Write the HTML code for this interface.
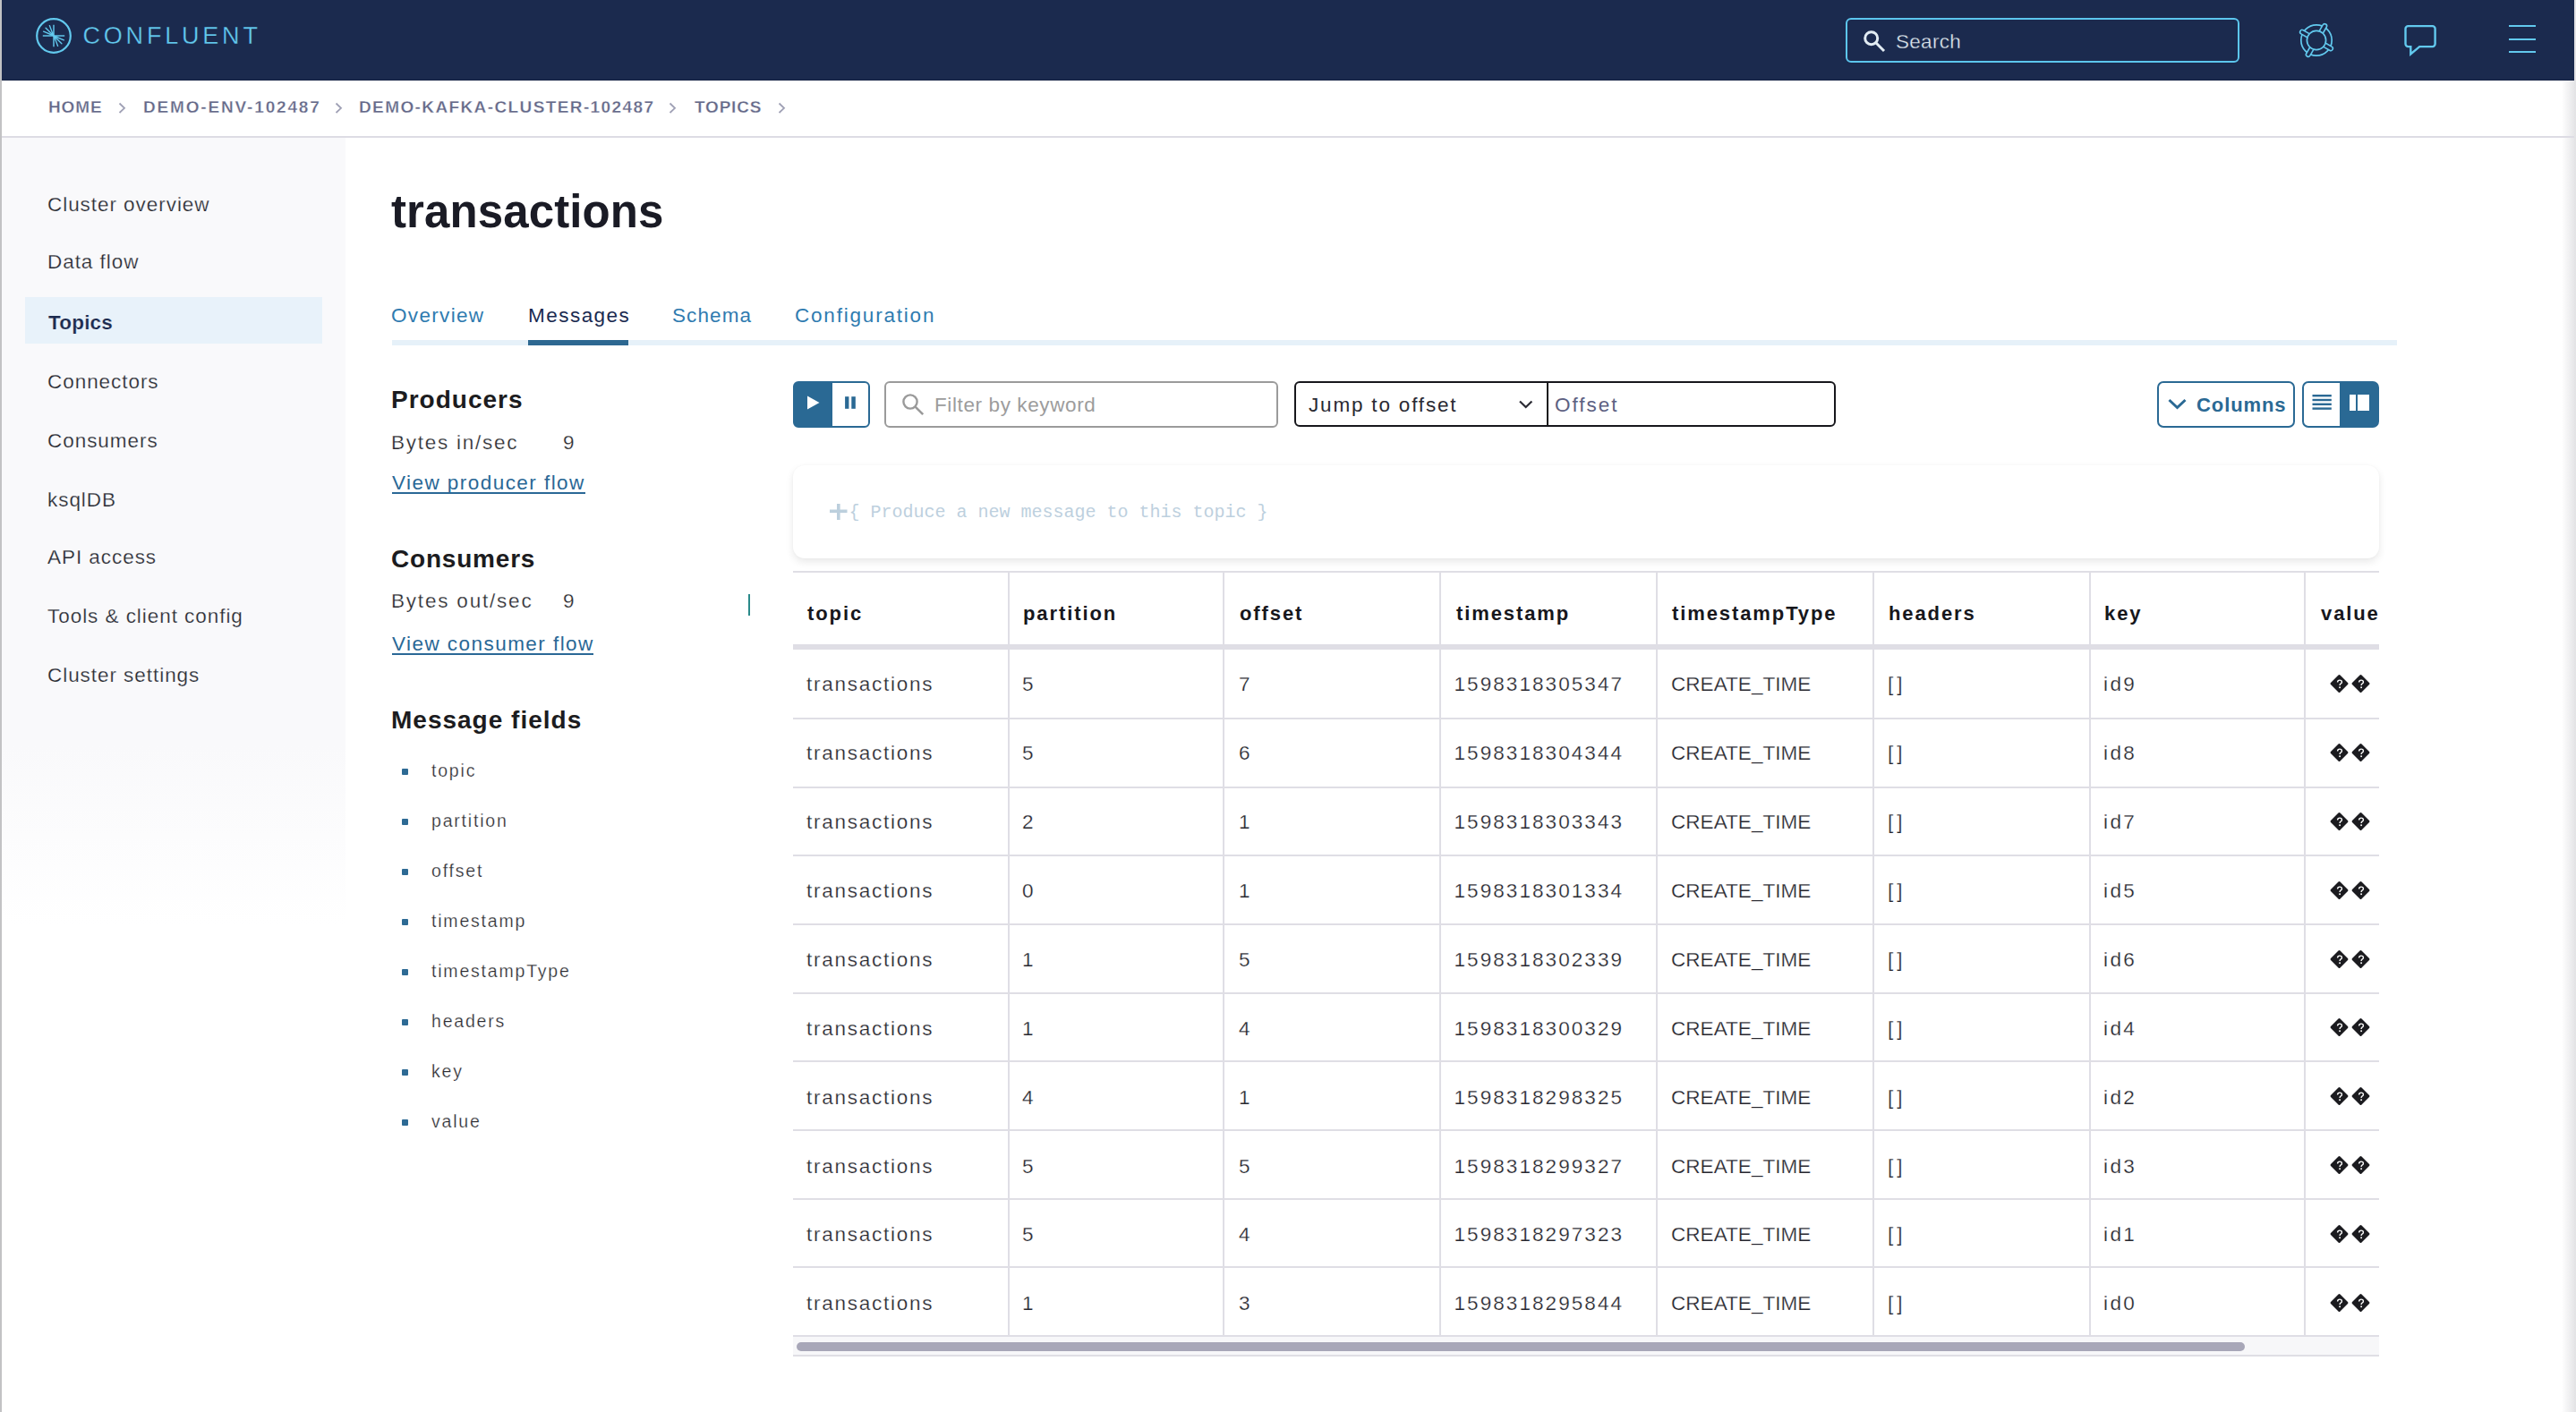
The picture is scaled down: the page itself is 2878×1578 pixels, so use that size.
<!DOCTYPE html>
<html><head><meta charset="utf-8">
<style>
*{box-sizing:border-box;margin:0;padding:0}
html,body{width:2878px;height:1578px;overflow:hidden;background:#fff;font-family:"Liberation Sans",sans-serif;position:relative}
.a{position:absolute}
.t{position:absolute;white-space:nowrap;line-height:1}
#lstrip{left:0;top:0;width:2px;height:1578px;background:#c2c2c4}
#rshade{left:2862px;top:90px;width:14px;height:1488px;background:linear-gradient(to right,rgba(230,230,232,0),rgba(230,230,232,1))}
#rstrip{left:2876px;top:0;width:2px;height:1578px;background:#e4e4e6}
#hdr{left:2px;top:0;width:2874px;height:90px;background:#1b2a4e;border-bottom:1px solid #142143}
#bc{left:2px;top:152px;width:2874px;height:2px;background:#dddce4}
.bci{font-size:19px;font-weight:bold;color:#646888;top:110px;-webkit-text-stroke:0.3px #fff}
#side{left:2px;top:154px;width:384px;height:900px;background:linear-gradient(to bottom,#f9f9fb 0px,#f9f9fb 680px,rgba(249,249,251,0) 880px)}
#hl{left:28px;top:332px;width:332px;height:52px;background:#e8f2fa}
.si{font-size:22.5px;letter-spacing:0.95px;color:#262830;left:53px;-webkit-text-stroke:0.25px #f9f9fb}
.tab{font-size:22.5px;color:#2f7bb0;top:341.5px}
.h2{font-size:28px;font-weight:bold;color:#1c1c20;letter-spacing:1.0px;left:437px}
.bx{font-size:22.5px;color:#2b2b30;-webkit-text-stroke:0.25px #fff}
.lk{font-size:22.5px;color:#2a6896;letter-spacing:1.45px;left:438px}
.bul{left:449px;width:7px;height:7px;background:#2d6a94;border-radius:1px}
.fld{left:482px;font-size:19.5px;color:#2b2b30;letter-spacing:1.8px;-webkit-text-stroke:0.25px #fff}
.rl{left:0;width:1772px;height:2px;background:#dfdee5}
.cl{top:2px;width:2px;height:854px;background:#dfdee5}
.th{font-size:22px;font-weight:bold;color:#17171c;letter-spacing:1.9px}
.td{font-size:22.5px;color:#26262e;-webkit-text-stroke:0.25px #fff}
</style></head><body>
<div class="a" id="lstrip"></div><div class="a" id="rshade"></div><div class="a" id="rstrip"></div>
<div class="a" id="hdr"></div>
<svg class="a" style="left:40px;top:20px" width="40" height="40" viewBox="0 0 40 40">
  <circle cx="20" cy="20" r="18.8" fill="none" stroke="#62c9ee" stroke-width="2.2"/>
  <g stroke="#62c9ee">
    <line x1="20" y1="7.8" x2="20" y2="32.2" stroke-width="2" stroke-opacity="0.72"/>
    <line x1="7.8" y1="20" x2="32.2" y2="20" stroke-width="2" stroke-opacity="0.72"/>
  </g>
  <g stroke="#62c9ee" stroke-width="1.35" stroke-linecap="round">
    <line x1="19" y1="18" x2="15.4" y2="8.6"/>
    <line x1="19" y1="19" x2="11.1" y2="11.3"/>
    <line x1="18" y1="19" x2="8.6" y2="15.2"/>
    <line x1="21" y1="22" x2="24.6" y2="31.4"/>
    <line x1="21" y1="21" x2="28.9" y2="28.7"/>
    <line x1="22" y1="21" x2="31.4" y2="24.8"/>
  </g>
  <g fill="#62c9ee"><path d="M20.8 20.8 L15.5 19 L19 15.5 Z"/><path d="M19.2 19.2 L24.5 21 L21 24.5 Z"/></g>
</svg>
<div class="t" style="left:92.5px;top:27.3px;font-size:27px;letter-spacing:3.8px;-webkit-text-stroke:0.3px #1b2a4e;color:#62c9ee">CONFLUENT</div>
<div class="a" style="left:2062px;top:20px;width:440px;height:50px;border:2px solid #5cc6ee;border-radius:6px"></div>
<svg class="a" style="left:2078px;top:30px" width="32" height="32" viewBox="0 0 32 32">
  <circle cx="12.7" cy="12.7" r="7" fill="none" stroke="#e2ecf3" stroke-width="3"/>
  <line x1="17.8" y1="17.8" x2="27" y2="27" stroke="#e2ecf3" stroke-width="3"/>
</svg>
<div class="t" style="left:2118px;top:36px;font-size:22.5px;letter-spacing:0.3px;-webkit-text-stroke:0.3px #1b2a4e;color:#dde6ee">Search</div>
<svg class="a" style="left:2563px;top:20px" width="50" height="50" viewBox="0 0 50 50">
  <circle cx="25" cy="25" r="17.2" fill="none" stroke="#62c9ee" stroke-width="1.7"/>
  <g fill="#1b2a4e" stroke="#62c9ee" stroke-width="1.6">
    <path d="M10.6 -2.4 H18.4 A2.4 2.4 0 0 1 18.4 2.4 H10.6" transform="translate(25 25) rotate(-60)"/>
    <path d="M10.6 -2.4 H18.4 A2.4 2.4 0 0 1 18.4 2.4 H10.6" transform="translate(25 25) rotate(30)"/>
    <path d="M10.6 -2.4 H18.4 A2.4 2.4 0 0 1 18.4 2.4 H10.6" transform="translate(25 25) rotate(120)"/>
    <path d="M10.6 -2.4 H18.4 A2.4 2.4 0 0 1 18.4 2.4 H10.6" transform="translate(25 25) rotate(210)"/>
  </g>
  <circle cx="25" cy="25" r="10.6" fill="none" stroke="#62c9ee" stroke-width="1.7"/>
</svg>
<svg class="a" style="left:2680px;top:20px" width="50" height="50" viewBox="0 0 50 50">
  <path d="M10.5 9.1 H37.6 A3 3 0 0 1 40.6 12.1 V29.1 A3 3 0 0 1 37.6 32.1 H23.2 L13.3 40.5 V32.1 H10.5 A3 3 0 0 1 7.5 29.1 V12.1 A3 3 0 0 1 10.5 9.1 Z" fill="none" stroke="#62c9ee" stroke-width="2.4"/>
</svg>
<div class="a" style="left:2803px;top:28px;width:30px;height:2px;background:#62c9ee"></div>
<div class="a" style="left:2803px;top:42.5px;width:30px;height:2px;background:#62c9ee"></div>
<div class="a" style="left:2803px;top:57px;width:30px;height:2px;background:#62c9ee"></div>
<div class="a" id="bc"></div>
<div class="t bci" style="left:54px;letter-spacing:0.9px">HOME</div>
<div class="t bci" style="left:160px;letter-spacing:1.84px">DEMO-ENV-102487</div>
<div class="t bci" style="left:401px;letter-spacing:1.39px">DEMO-KAFKA-CLUSTER-102487</div>
<div class="t bci" style="left:776px;letter-spacing:0.8px">TOPICS</div>
<svg class="a" style="left:130px;top:112px" width="760" height="18" viewBox="0 0 760 18">
  <g fill="none" stroke="#9fa0b5" stroke-width="1.8">
    <polyline points="3.5,3.5 9,8.8 3.5,14"/>
    <polyline points="245.5,3.5 251,8.8 245.5,14"/>
    <polyline points="618.5,3.5 624,8.8 618.5,14"/>
    <polyline points="740.5,3.5 746,8.8 740.5,14"/>
  </g>
</svg>
<div class="a" id="side"></div><div class="a" id="hl"></div>
<div class="t si" style="top:217.5px">Cluster overview</div>
<div class="t si" style="top:281.5px">Data flow</div>
<div class="t si" style="left:54px;top:349.5px;font-weight:bold;color:#1c2b4f;letter-spacing:0.2px;-webkit-text-stroke:0.2px #e8f2fa">Topics</div>
<div class="t si" style="top:415.5px">Connectors</div>
<div class="t si" style="top:481.5px">Consumers</div>
<div class="t si" style="top:547.5px">ksqlDB</div>
<div class="t si" style="top:611.5px">API access</div>
<div class="t si" style="top:677.5px">Tools &amp; client config</div>
<div class="t si" style="top:743.5px">Cluster settings</div>
<div class="t" style="left:437px;top:211.2px;font-size:51px;font-weight:bold;letter-spacing:0.1px;color:#1a1b25">transactions</div>
<div class="a" style="left:438px;top:380px;width:2240px;height:6px;background:#e6f1f9"></div>
<div class="a" style="left:590px;top:380px;width:112px;height:6px;background:#2d6891"></div>
<div class="t tab" style="left:437px;letter-spacing:1.33px">Overview</div>
<div class="t tab" style="left:590px;letter-spacing:1.47px;color:#1a2a50">Messages</div>
<div class="t tab" style="left:751px;letter-spacing:1.1px">Schema</div>
<div class="t tab" style="left:888px;letter-spacing:1.8px">Configuration</div>
<div class="t h2" style="top:432.5px">Producers</div>
<div class="t bx" style="left:437px;top:483.5px;letter-spacing:1.75px">Bytes in/sec</div>
<div class="t bx" style="left:629px;top:483.5px">9</div>
<div class="t lk" style="top:529px">View producer flow</div>
<div class="a" style="left:438px;top:550px;width:216px;height:2px;background:#2a6896"></div>
<div class="t h2" style="top:610.5px;letter-spacing:0.8px">Consumers</div>
<div class="t bx" style="left:437px;top:660.5px;letter-spacing:1.8px">Bytes out/sec</div>
<div class="t bx" style="left:629px;top:660.5px">9</div>
<div class="a" style="left:836px;top:664px;width:2px;height:24px;background:#2a8a8a"></div>
<div class="t lk" style="top:709px">View consumer flow</div>
<div class="a" style="left:438px;top:729.5px;width:225px;height:2px;background:#2a6896"></div>
<div class="t h2" style="top:790.5px">Message fields</div>
<div class="a bul" style="top:859px"></div><div class="t fld" style="top:852px">topic</div>
<div class="a bul" style="top:915px"></div><div class="t fld" style="top:908px">partition</div>
<div class="a bul" style="top:971px"></div><div class="t fld" style="top:964px">offset</div>
<div class="a bul" style="top:1027px"></div><div class="t fld" style="top:1020px">timestamp</div>
<div class="a bul" style="top:1083px"></div><div class="t fld" style="top:1076px">timestampType</div>
<div class="a bul" style="top:1139px"></div><div class="t fld" style="top:1132px">headers</div>
<div class="a bul" style="top:1195px"></div><div class="t fld" style="top:1188px">key</div>
<div class="a bul" style="top:1251px"></div><div class="t fld" style="top:1244px">value</div>
<div class="a" style="left:886px;top:426px;width:86px;height:52px;border:2px solid #2a6994;border-radius:6px;background:linear-gradient(to right,#2a6994 0,#2a6994 42px,#fff 42px)"></div>
<svg class="a" style="left:886px;top:426px" width="86" height="52" viewBox="0 0 86 52">
  <path d="M16 16.5 L29.5 24 L16 31.5 Z" fill="#fff"/>
  <rect x="58.1" y="17.2" width="4.3" height="13.6" fill="#2a6994"/>
  <rect x="65.3" y="17.2" width="4.5" height="13.6" fill="#2a6994"/>
</svg>
<div class="a" style="left:988px;top:426px;width:440px;height:52px;border:2px solid #9b9b9b;border-radius:6px"></div>
<svg class="a" style="left:1004px;top:436px" width="32" height="32" viewBox="0 0 32 32">
  <circle cx="13" cy="13" r="7.6" fill="none" stroke="#9a9a9a" stroke-width="2.4"/>
  <line x1="18.6" y1="18.6" x2="27.2" y2="27.2" stroke="#9a9a9a" stroke-width="2.6"/>
</svg>
<div class="t" style="left:1044px;top:442px;font-size:22.5px;color:#9c9c9c;letter-spacing:0.61px">Filter by keyword</div>
<div class="a" style="left:1446px;top:426px;width:605px;height:51px;border:2px solid #17171c;border-radius:6px"></div>
<div class="a" style="left:1728px;top:426px;width:2px;height:51px;background:#17171c"></div>
<div class="t" style="left:1462px;top:442px;font-size:22.5px;color:#2a2a33;letter-spacing:1.82px">Jump to offset</div>
<svg class="a" style="left:1690px;top:440px" width="30" height="24" viewBox="0 0 30 24">
  <polyline points="8,8.5 14.7,15 21.4,8.5" fill="none" stroke="#2a2a33" stroke-width="2.2"/>
</svg>
<div class="t" style="left:1737px;top:442px;font-size:22.5px;color:#5d6182;letter-spacing:1.98px">Offset</div>
<div class="a" style="left:2410px;top:426px;width:154px;height:52px;border:2px solid #2a6994;border-radius:7px"></div>
<svg class="a" style="left:2418px;top:440px" width="30" height="24" viewBox="0 0 30 24">
  <polyline points="5.5,7 14.5,15.5 23.5,7" fill="none" stroke="#2a6994" stroke-width="3"/>
</svg>
<div class="t" style="left:2454px;top:441.5px;font-size:22px;font-weight:bold;color:#2a6994;letter-spacing:0.9px">Columns</div>
<div class="a" style="left:2572px;top:426px;width:86px;height:52px;border:2px solid #2a6994;border-radius:7px;background:linear-gradient(to right,#fff 0,#fff 40px,#2a6994 40px)"></div>
<svg class="a" style="left:2572px;top:426px" width="86" height="52" viewBox="0 0 86 52">
  <g fill="#2a6994">
    <rect x="11.5" y="15" width="21.3" height="2.4"/><rect x="11.5" y="19.8" width="21.3" height="2.4"/>
    <rect x="11.5" y="24.6" width="21.3" height="2.4"/><rect x="11.5" y="29.4" width="21.3" height="2.4"/>
  </g>
  <g fill="#fff"><rect x="53" y="15" width="7" height="18"/><rect x="62" y="15" width="13" height="18"/></g>
</svg>
<div class="a" style="left:886px;top:520px;width:1772px;height:104px;border-radius:13px;background:#fff;box-shadow:0 4px 10px rgba(0,0,0,0.09),0 0 3px rgba(0,0,0,0.03)"></div>
<svg class="a" style="left:924px;top:560px" width="26" height="24" viewBox="0 0 26 24">
  <rect x="3" y="9.5" width="19.5" height="3.6" fill="#bccfdd"/><rect x="11" y="3" width="3.6" height="18" fill="#bccfdd"/>
</svg>
<div class="t" style="left:948.5px;top:563px;font-family:'Liberation Mono',monospace;font-size:20px;color:#bdd0de">{ Produce a new message to this topic }</div>
<div class="a" id="tbl" style="left:886px;top:638px;width:1772px;height:880px;overflow:hidden">
<div class="a" style="left:0;top:0;width:1772px;height:2px;background:#dfdee5"></div>
<div class="a" style="left:0;top:82px;width:1772px;height:6px;background:#dfdee5"></div>
<div class="a rl" style="top:164.00px"></div>
<div class="a rl" style="top:240.67px"></div>
<div class="a rl" style="top:317.33px"></div>
<div class="a rl" style="top:394.00px"></div>
<div class="a rl" style="top:470.67px"></div>
<div class="a rl" style="top:547.33px"></div>
<div class="a rl" style="top:624.00px"></div>
<div class="a rl" style="top:700.67px"></div>
<div class="a rl" style="top:777.33px"></div>
<div class="a rl" style="top:854.00px"></div>
<div class="a cl" style="left:240px"></div>
<div class="a cl" style="left:480px"></div>
<div class="a cl" style="left:722px"></div>
<div class="a cl" style="left:964px"></div>
<div class="a cl" style="left:1206px"></div>
<div class="a cl" style="left:1448px"></div>
<div class="a cl" style="left:1688px"></div>
<div class="t th" style="left:16px;top:37px">topic</div>
<div class="t th" style="left:257px;top:37px">partition</div>
<div class="t th" style="left:499px;top:37px">offset</div>
<div class="t th" style="left:741px;top:37px">timestamp</div>
<div class="t th" style="left:982px;top:37px">timestampType</div>
<div class="t th" style="left:1224px;top:37px">headers</div>
<div class="t th" style="left:1465px;top:37px">key</div>
<div class="t th" style="left:1707px;top:37px">value</div>
<div class="t td" style="left:15.0px;top:116.00px;letter-spacing:1.75px">transactions</div>
<div class="t td" style="left:256.0px;top:116.00px;letter-spacing:1.3px">5</div>
<div class="t td" style="left:498.0px;top:116.00px;letter-spacing:1.3px">7</div>
<div class="t td" style="left:738.5px;top:116.00px;letter-spacing:2.07px">1598318305347</div>
<div class="t td" style="left:981.0px;top:116.00px;letter-spacing:0.05px">CREATE_TIME</div>
<div class="t td" style="left:1223.0px;top:116.00px;letter-spacing:4.0px">[]</div>
<div class="t td" style="left:1464.0px;top:116.00px;letter-spacing:2.4px">id9</div>
<svg class="a" style="left:1716px;top:114.00px" width="48" height="24" viewBox="0 0 48 24"><g transform="translate(2 0)"><path d="M10.5 2.5 L19 11 Q20 12 19 13 L10.5 21.5 Q9.5 22.5 8.5 21.5 L0 13 Q-1 12 0 11 L8.5 2.5 Q9.5 1.5 10.5 2.5 Z" fill="#1b1b1f"/><path d="M7.6 10.4 Q7.6 8.1 10 8.1 Q12.4 8.1 12.4 10.2 Q12.4 11.4 11 12.1 Q10.1 12.6 10.1 14.0" fill="none" stroke="#fff" stroke-width="1.4"/><rect x="9.25" y="15.4" width="1.7" height="1.7" fill="#fff"/></g><g transform="translate(26 0)"><path d="M10.5 2.5 L19 11 Q20 12 19 13 L10.5 21.5 Q9.5 22.5 8.5 21.5 L0 13 Q-1 12 0 11 L8.5 2.5 Q9.5 1.5 10.5 2.5 Z" fill="#1b1b1f"/><path d="M7.6 10.4 Q7.6 8.1 10 8.1 Q12.4 8.1 12.4 10.2 Q12.4 11.4 11 12.1 Q10.1 12.6 10.1 14.0" fill="none" stroke="#fff" stroke-width="1.4"/><rect x="9.25" y="15.4" width="1.7" height="1.7" fill="#fff"/></g></svg>
<div class="t td" style="left:15.0px;top:193.00px;letter-spacing:1.75px">transactions</div>
<div class="t td" style="left:256.0px;top:193.00px;letter-spacing:1.3px">5</div>
<div class="t td" style="left:498.0px;top:193.00px;letter-spacing:1.3px">6</div>
<div class="t td" style="left:738.5px;top:193.00px;letter-spacing:2.07px">1598318304344</div>
<div class="t td" style="left:981.0px;top:193.00px;letter-spacing:0.05px">CREATE_TIME</div>
<div class="t td" style="left:1223.0px;top:193.00px;letter-spacing:4.0px">[]</div>
<div class="t td" style="left:1464.0px;top:193.00px;letter-spacing:2.4px">id8</div>
<svg class="a" style="left:1716px;top:190.88px" width="48" height="24" viewBox="0 0 48 24"><g transform="translate(2 0)"><path d="M10.5 2.5 L19 11 Q20 12 19 13 L10.5 21.5 Q9.5 22.5 8.5 21.5 L0 13 Q-1 12 0 11 L8.5 2.5 Q9.5 1.5 10.5 2.5 Z" fill="#1b1b1f"/><path d="M7.6 10.4 Q7.6 8.1 10 8.1 Q12.4 8.1 12.4 10.2 Q12.4 11.4 11 12.1 Q10.1 12.6 10.1 14.0" fill="none" stroke="#fff" stroke-width="1.4"/><rect x="9.25" y="15.4" width="1.7" height="1.7" fill="#fff"/></g><g transform="translate(26 0)"><path d="M10.5 2.5 L19 11 Q20 12 19 13 L10.5 21.5 Q9.5 22.5 8.5 21.5 L0 13 Q-1 12 0 11 L8.5 2.5 Q9.5 1.5 10.5 2.5 Z" fill="#1b1b1f"/><path d="M7.6 10.4 Q7.6 8.1 10 8.1 Q12.4 8.1 12.4 10.2 Q12.4 11.4 11 12.1 Q10.1 12.6 10.1 14.0" fill="none" stroke="#fff" stroke-width="1.4"/><rect x="9.25" y="15.4" width="1.7" height="1.7" fill="#fff"/></g></svg>
<div class="t td" style="left:15.0px;top:270.00px;letter-spacing:1.75px">transactions</div>
<div class="t td" style="left:256.0px;top:270.00px;letter-spacing:1.3px">2</div>
<div class="t td" style="left:498.0px;top:270.00px;letter-spacing:1.3px">1</div>
<div class="t td" style="left:738.5px;top:270.00px;letter-spacing:2.07px">1598318303343</div>
<div class="t td" style="left:981.0px;top:270.00px;letter-spacing:0.05px">CREATE_TIME</div>
<div class="t td" style="left:1223.0px;top:270.00px;letter-spacing:4.0px">[]</div>
<div class="t td" style="left:1464.0px;top:270.00px;letter-spacing:2.4px">id7</div>
<svg class="a" style="left:1716px;top:267.76px" width="48" height="24" viewBox="0 0 48 24"><g transform="translate(2 0)"><path d="M10.5 2.5 L19 11 Q20 12 19 13 L10.5 21.5 Q9.5 22.5 8.5 21.5 L0 13 Q-1 12 0 11 L8.5 2.5 Q9.5 1.5 10.5 2.5 Z" fill="#1b1b1f"/><path d="M7.6 10.4 Q7.6 8.1 10 8.1 Q12.4 8.1 12.4 10.2 Q12.4 11.4 11 12.1 Q10.1 12.6 10.1 14.0" fill="none" stroke="#fff" stroke-width="1.4"/><rect x="9.25" y="15.4" width="1.7" height="1.7" fill="#fff"/></g><g transform="translate(26 0)"><path d="M10.5 2.5 L19 11 Q20 12 19 13 L10.5 21.5 Q9.5 22.5 8.5 21.5 L0 13 Q-1 12 0 11 L8.5 2.5 Q9.5 1.5 10.5 2.5 Z" fill="#1b1b1f"/><path d="M7.6 10.4 Q7.6 8.1 10 8.1 Q12.4 8.1 12.4 10.2 Q12.4 11.4 11 12.1 Q10.1 12.6 10.1 14.0" fill="none" stroke="#fff" stroke-width="1.4"/><rect x="9.25" y="15.4" width="1.7" height="1.7" fill="#fff"/></g></svg>
<div class="t td" style="left:15.0px;top:347.00px;letter-spacing:1.75px">transactions</div>
<div class="t td" style="left:256.0px;top:347.00px;letter-spacing:1.3px">0</div>
<div class="t td" style="left:498.0px;top:347.00px;letter-spacing:1.3px">1</div>
<div class="t td" style="left:738.5px;top:347.00px;letter-spacing:2.07px">1598318301334</div>
<div class="t td" style="left:981.0px;top:347.00px;letter-spacing:0.05px">CREATE_TIME</div>
<div class="t td" style="left:1223.0px;top:347.00px;letter-spacing:4.0px">[]</div>
<div class="t td" style="left:1464.0px;top:347.00px;letter-spacing:2.4px">id5</div>
<svg class="a" style="left:1716px;top:344.64px" width="48" height="24" viewBox="0 0 48 24"><g transform="translate(2 0)"><path d="M10.5 2.5 L19 11 Q20 12 19 13 L10.5 21.5 Q9.5 22.5 8.5 21.5 L0 13 Q-1 12 0 11 L8.5 2.5 Q9.5 1.5 10.5 2.5 Z" fill="#1b1b1f"/><path d="M7.6 10.4 Q7.6 8.1 10 8.1 Q12.4 8.1 12.4 10.2 Q12.4 11.4 11 12.1 Q10.1 12.6 10.1 14.0" fill="none" stroke="#fff" stroke-width="1.4"/><rect x="9.25" y="15.4" width="1.7" height="1.7" fill="#fff"/></g><g transform="translate(26 0)"><path d="M10.5 2.5 L19 11 Q20 12 19 13 L10.5 21.5 Q9.5 22.5 8.5 21.5 L0 13 Q-1 12 0 11 L8.5 2.5 Q9.5 1.5 10.5 2.5 Z" fill="#1b1b1f"/><path d="M7.6 10.4 Q7.6 8.1 10 8.1 Q12.4 8.1 12.4 10.2 Q12.4 11.4 11 12.1 Q10.1 12.6 10.1 14.0" fill="none" stroke="#fff" stroke-width="1.4"/><rect x="9.25" y="15.4" width="1.7" height="1.7" fill="#fff"/></g></svg>
<div class="t td" style="left:15.0px;top:424.00px;letter-spacing:1.75px">transactions</div>
<div class="t td" style="left:256.0px;top:424.00px;letter-spacing:1.3px">1</div>
<div class="t td" style="left:498.0px;top:424.00px;letter-spacing:1.3px">5</div>
<div class="t td" style="left:738.5px;top:424.00px;letter-spacing:2.07px">1598318302339</div>
<div class="t td" style="left:981.0px;top:424.00px;letter-spacing:0.05px">CREATE_TIME</div>
<div class="t td" style="left:1223.0px;top:424.00px;letter-spacing:4.0px">[]</div>
<div class="t td" style="left:1464.0px;top:424.00px;letter-spacing:2.4px">id6</div>
<svg class="a" style="left:1716px;top:421.52px" width="48" height="24" viewBox="0 0 48 24"><g transform="translate(2 0)"><path d="M10.5 2.5 L19 11 Q20 12 19 13 L10.5 21.5 Q9.5 22.5 8.5 21.5 L0 13 Q-1 12 0 11 L8.5 2.5 Q9.5 1.5 10.5 2.5 Z" fill="#1b1b1f"/><path d="M7.6 10.4 Q7.6 8.1 10 8.1 Q12.4 8.1 12.4 10.2 Q12.4 11.4 11 12.1 Q10.1 12.6 10.1 14.0" fill="none" stroke="#fff" stroke-width="1.4"/><rect x="9.25" y="15.4" width="1.7" height="1.7" fill="#fff"/></g><g transform="translate(26 0)"><path d="M10.5 2.5 L19 11 Q20 12 19 13 L10.5 21.5 Q9.5 22.5 8.5 21.5 L0 13 Q-1 12 0 11 L8.5 2.5 Q9.5 1.5 10.5 2.5 Z" fill="#1b1b1f"/><path d="M7.6 10.4 Q7.6 8.1 10 8.1 Q12.4 8.1 12.4 10.2 Q12.4 11.4 11 12.1 Q10.1 12.6 10.1 14.0" fill="none" stroke="#fff" stroke-width="1.4"/><rect x="9.25" y="15.4" width="1.7" height="1.7" fill="#fff"/></g></svg>
<div class="t td" style="left:15.0px;top:501.00px;letter-spacing:1.75px">transactions</div>
<div class="t td" style="left:256.0px;top:501.00px;letter-spacing:1.3px">1</div>
<div class="t td" style="left:498.0px;top:501.00px;letter-spacing:1.3px">4</div>
<div class="t td" style="left:738.5px;top:501.00px;letter-spacing:2.07px">1598318300329</div>
<div class="t td" style="left:981.0px;top:501.00px;letter-spacing:0.05px">CREATE_TIME</div>
<div class="t td" style="left:1223.0px;top:501.00px;letter-spacing:4.0px">[]</div>
<div class="t td" style="left:1464.0px;top:501.00px;letter-spacing:2.4px">id4</div>
<svg class="a" style="left:1716px;top:498.40px" width="48" height="24" viewBox="0 0 48 24"><g transform="translate(2 0)"><path d="M10.5 2.5 L19 11 Q20 12 19 13 L10.5 21.5 Q9.5 22.5 8.5 21.5 L0 13 Q-1 12 0 11 L8.5 2.5 Q9.5 1.5 10.5 2.5 Z" fill="#1b1b1f"/><path d="M7.6 10.4 Q7.6 8.1 10 8.1 Q12.4 8.1 12.4 10.2 Q12.4 11.4 11 12.1 Q10.1 12.6 10.1 14.0" fill="none" stroke="#fff" stroke-width="1.4"/><rect x="9.25" y="15.4" width="1.7" height="1.7" fill="#fff"/></g><g transform="translate(26 0)"><path d="M10.5 2.5 L19 11 Q20 12 19 13 L10.5 21.5 Q9.5 22.5 8.5 21.5 L0 13 Q-1 12 0 11 L8.5 2.5 Q9.5 1.5 10.5 2.5 Z" fill="#1b1b1f"/><path d="M7.6 10.4 Q7.6 8.1 10 8.1 Q12.4 8.1 12.4 10.2 Q12.4 11.4 11 12.1 Q10.1 12.6 10.1 14.0" fill="none" stroke="#fff" stroke-width="1.4"/><rect x="9.25" y="15.4" width="1.7" height="1.7" fill="#fff"/></g></svg>
<div class="t td" style="left:15.0px;top:578.00px;letter-spacing:1.75px">transactions</div>
<div class="t td" style="left:256.0px;top:578.00px;letter-spacing:1.3px">4</div>
<div class="t td" style="left:498.0px;top:578.00px;letter-spacing:1.3px">1</div>
<div class="t td" style="left:738.5px;top:578.00px;letter-spacing:2.07px">1598318298325</div>
<div class="t td" style="left:981.0px;top:578.00px;letter-spacing:0.05px">CREATE_TIME</div>
<div class="t td" style="left:1223.0px;top:578.00px;letter-spacing:4.0px">[]</div>
<div class="t td" style="left:1464.0px;top:578.00px;letter-spacing:2.4px">id2</div>
<svg class="a" style="left:1716px;top:575.28px" width="48" height="24" viewBox="0 0 48 24"><g transform="translate(2 0)"><path d="M10.5 2.5 L19 11 Q20 12 19 13 L10.5 21.5 Q9.5 22.5 8.5 21.5 L0 13 Q-1 12 0 11 L8.5 2.5 Q9.5 1.5 10.5 2.5 Z" fill="#1b1b1f"/><path d="M7.6 10.4 Q7.6 8.1 10 8.1 Q12.4 8.1 12.4 10.2 Q12.4 11.4 11 12.1 Q10.1 12.6 10.1 14.0" fill="none" stroke="#fff" stroke-width="1.4"/><rect x="9.25" y="15.4" width="1.7" height="1.7" fill="#fff"/></g><g transform="translate(26 0)"><path d="M10.5 2.5 L19 11 Q20 12 19 13 L10.5 21.5 Q9.5 22.5 8.5 21.5 L0 13 Q-1 12 0 11 L8.5 2.5 Q9.5 1.5 10.5 2.5 Z" fill="#1b1b1f"/><path d="M7.6 10.4 Q7.6 8.1 10 8.1 Q12.4 8.1 12.4 10.2 Q12.4 11.4 11 12.1 Q10.1 12.6 10.1 14.0" fill="none" stroke="#fff" stroke-width="1.4"/><rect x="9.25" y="15.4" width="1.7" height="1.7" fill="#fff"/></g></svg>
<div class="t td" style="left:15.0px;top:655.00px;letter-spacing:1.75px">transactions</div>
<div class="t td" style="left:256.0px;top:655.00px;letter-spacing:1.3px">5</div>
<div class="t td" style="left:498.0px;top:655.00px;letter-spacing:1.3px">5</div>
<div class="t td" style="left:738.5px;top:655.00px;letter-spacing:2.07px">1598318299327</div>
<div class="t td" style="left:981.0px;top:655.00px;letter-spacing:0.05px">CREATE_TIME</div>
<div class="t td" style="left:1223.0px;top:655.00px;letter-spacing:4.0px">[]</div>
<div class="t td" style="left:1464.0px;top:655.00px;letter-spacing:2.4px">id3</div>
<svg class="a" style="left:1716px;top:652.16px" width="48" height="24" viewBox="0 0 48 24"><g transform="translate(2 0)"><path d="M10.5 2.5 L19 11 Q20 12 19 13 L10.5 21.5 Q9.5 22.5 8.5 21.5 L0 13 Q-1 12 0 11 L8.5 2.5 Q9.5 1.5 10.5 2.5 Z" fill="#1b1b1f"/><path d="M7.6 10.4 Q7.6 8.1 10 8.1 Q12.4 8.1 12.4 10.2 Q12.4 11.4 11 12.1 Q10.1 12.6 10.1 14.0" fill="none" stroke="#fff" stroke-width="1.4"/><rect x="9.25" y="15.4" width="1.7" height="1.7" fill="#fff"/></g><g transform="translate(26 0)"><path d="M10.5 2.5 L19 11 Q20 12 19 13 L10.5 21.5 Q9.5 22.5 8.5 21.5 L0 13 Q-1 12 0 11 L8.5 2.5 Q9.5 1.5 10.5 2.5 Z" fill="#1b1b1f"/><path d="M7.6 10.4 Q7.6 8.1 10 8.1 Q12.4 8.1 12.4 10.2 Q12.4 11.4 11 12.1 Q10.1 12.6 10.1 14.0" fill="none" stroke="#fff" stroke-width="1.4"/><rect x="9.25" y="15.4" width="1.7" height="1.7" fill="#fff"/></g></svg>
<div class="t td" style="left:15.0px;top:731.00px;letter-spacing:1.75px">transactions</div>
<div class="t td" style="left:256.0px;top:731.00px;letter-spacing:1.3px">5</div>
<div class="t td" style="left:498.0px;top:731.00px;letter-spacing:1.3px">4</div>
<div class="t td" style="left:738.5px;top:731.00px;letter-spacing:2.07px">1598318297323</div>
<div class="t td" style="left:981.0px;top:731.00px;letter-spacing:0.05px">CREATE_TIME</div>
<div class="t td" style="left:1223.0px;top:731.00px;letter-spacing:4.0px">[]</div>
<div class="t td" style="left:1464.0px;top:731.00px;letter-spacing:2.4px">id1</div>
<svg class="a" style="left:1716px;top:729.04px" width="48" height="24" viewBox="0 0 48 24"><g transform="translate(2 0)"><path d="M10.5 2.5 L19 11 Q20 12 19 13 L10.5 21.5 Q9.5 22.5 8.5 21.5 L0 13 Q-1 12 0 11 L8.5 2.5 Q9.5 1.5 10.5 2.5 Z" fill="#1b1b1f"/><path d="M7.6 10.4 Q7.6 8.1 10 8.1 Q12.4 8.1 12.4 10.2 Q12.4 11.4 11 12.1 Q10.1 12.6 10.1 14.0" fill="none" stroke="#fff" stroke-width="1.4"/><rect x="9.25" y="15.4" width="1.7" height="1.7" fill="#fff"/></g><g transform="translate(26 0)"><path d="M10.5 2.5 L19 11 Q20 12 19 13 L10.5 21.5 Q9.5 22.5 8.5 21.5 L0 13 Q-1 12 0 11 L8.5 2.5 Q9.5 1.5 10.5 2.5 Z" fill="#1b1b1f"/><path d="M7.6 10.4 Q7.6 8.1 10 8.1 Q12.4 8.1 12.4 10.2 Q12.4 11.4 11 12.1 Q10.1 12.6 10.1 14.0" fill="none" stroke="#fff" stroke-width="1.4"/><rect x="9.25" y="15.4" width="1.7" height="1.7" fill="#fff"/></g></svg>
<div class="t td" style="left:15.0px;top:808.00px;letter-spacing:1.75px">transactions</div>
<div class="t td" style="left:256.0px;top:808.00px;letter-spacing:1.3px">1</div>
<div class="t td" style="left:498.0px;top:808.00px;letter-spacing:1.3px">3</div>
<div class="t td" style="left:738.5px;top:808.00px;letter-spacing:2.07px">1598318295844</div>
<div class="t td" style="left:981.0px;top:808.00px;letter-spacing:0.05px">CREATE_TIME</div>
<div class="t td" style="left:1223.0px;top:808.00px;letter-spacing:4.0px">[]</div>
<div class="t td" style="left:1464.0px;top:808.00px;letter-spacing:2.4px">id0</div>
<svg class="a" style="left:1716px;top:805.92px" width="48" height="24" viewBox="0 0 48 24"><g transform="translate(2 0)"><path d="M10.5 2.5 L19 11 Q20 12 19 13 L10.5 21.5 Q9.5 22.5 8.5 21.5 L0 13 Q-1 12 0 11 L8.5 2.5 Q9.5 1.5 10.5 2.5 Z" fill="#1b1b1f"/><path d="M7.6 10.4 Q7.6 8.1 10 8.1 Q12.4 8.1 12.4 10.2 Q12.4 11.4 11 12.1 Q10.1 12.6 10.1 14.0" fill="none" stroke="#fff" stroke-width="1.4"/><rect x="9.25" y="15.4" width="1.7" height="1.7" fill="#fff"/></g><g transform="translate(26 0)"><path d="M10.5 2.5 L19 11 Q20 12 19 13 L10.5 21.5 Q9.5 22.5 8.5 21.5 L0 13 Q-1 12 0 11 L8.5 2.5 Q9.5 1.5 10.5 2.5 Z" fill="#1b1b1f"/><path d="M7.6 10.4 Q7.6 8.1 10 8.1 Q12.4 8.1 12.4 10.2 Q12.4 11.4 11 12.1 Q10.1 12.6 10.1 14.0" fill="none" stroke="#fff" stroke-width="1.4"/><rect x="9.25" y="15.4" width="1.7" height="1.7" fill="#fff"/></g></svg>
<div class="a" style="left:0;top:856px;width:1772px;height:20px;background:#f7f7f9"></div>
<div class="a" style="left:0;top:876px;width:1772px;height:2px;background:#dfdee5"></div>
<div class="a" style="left:4px;top:862px;width:1618px;height:10px;border-radius:5px;background:#a8a7b8"></div>
</div>
</body></html>
